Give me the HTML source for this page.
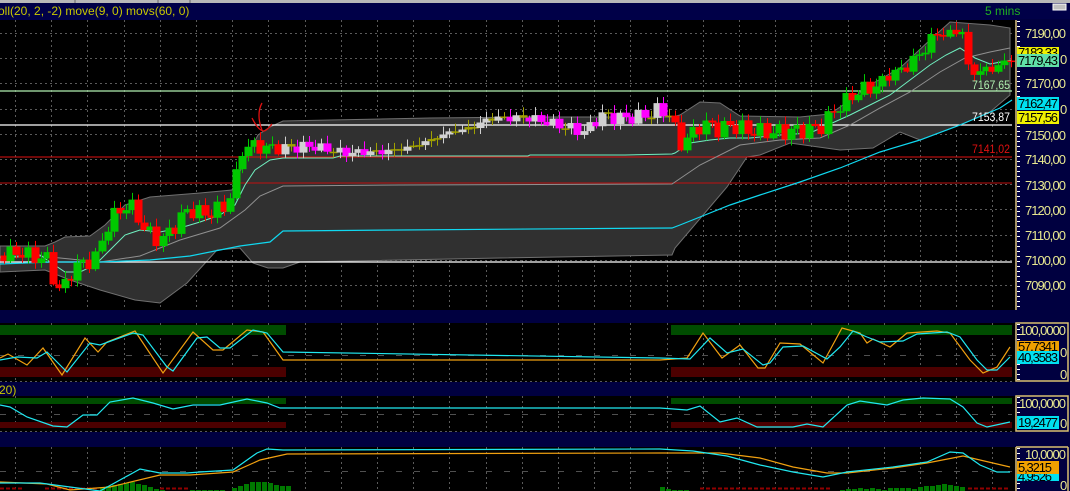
<!DOCTYPE html>
<html><head><meta charset="utf-8">
<style>
html,body{margin:0;padding:0;background:#000;width:1070px;height:491px;overflow:hidden;font-family:"Liberation Sans",sans-serif}
svg{display:block}
text{font-family:"Liberation Sans",sans-serif}
</style></head>
<body>
<svg id="s" width="1070" height="491" xmlns="http://www.w3.org/2000/svg">
<rect width="1070" height="491" fill="#000"/>
<rect x="0" y="0" width="1070" height="20" fill="#000048"/>
<rect x="0" y="0" width="1070" height="3" fill="#b8b8b8"/>
<line x1="75" y1="0" x2="75" y2="3" stroke="#666"/><line x1="158" y1="0" x2="158" y2="3" stroke="#666"/><line x1="190" y1="0" x2="190" y2="3" stroke="#666"/>
<text x="-2" y="15" font-size="12" fill="#c8c800">oll(20, 2, -2) move(9, 0) movs(60, 0)</text>
<text x="985" y="15" font-size="12" fill="#20b020">5 mins</text>
<rect x="1053" y="4" width="13" height="6" fill="#c0c0c0" stroke="#fff" stroke-width="1"/>
<g id="grid"></g>
<path id="band" fill="#303030" stroke="#707070" stroke-width="1"/>
<g id="hl">
<line x1="0" y1="91" x2="1012" y2="91" stroke="#b0f0b0" stroke-width="1.2"/>
<line x1="0" y1="125" x2="1012" y2="125" stroke="#fff" stroke-width="1.2"/>
<line x1="0" y1="157" x2="1012" y2="157" stroke="#e01010" stroke-width="1"/>
<line x1="0" y1="183" x2="1012" y2="183" stroke="#c01010" stroke-width="1"/>
<line x1="0" y1="262" x2="1012" y2="262" stroke="#fff" stroke-width="1.2"/>
</g>
<polyline id="mid" fill="none" stroke="#909090" stroke-width="1"/>
<polyline id="mv9" fill="none" stroke="#70f0c0" stroke-width="1"/>
<polyline id="mv60" fill="none" stroke="#10d8f0" stroke-width="1.2"/>
<g id="candles"></g>
<path d="M262,103 C258,110 258,120 262,130 M252,118 C256,126 260,131 264,131 C268,130 270,126 272,124" fill="none" stroke="#e01010" stroke-width="1.3"/>
<text x="972" y="89" font-size="12" fill="#b0f0b0" textLength="38" lengthAdjust="spacingAndGlyphs">7167,65</text>
<text x="972" y="121" font-size="12" fill="#fff" textLength="38" lengthAdjust="spacingAndGlyphs">7153,87</text>
<text x="972" y="153" font-size="12" fill="#e01010" textLength="38" lengthAdjust="spacingAndGlyphs">7141,02</text>

<rect x="0" y="310" width="1070" height="13" fill="#000040"/>
<rect x="0" y="382" width="1070" height="14" fill="#000040"/>
<text x="-1" y="394" font-size="12" fill="#c8c800">20)</text>
<rect x="0" y="432" width="1070" height="15" fill="#000040"/>
<rect x="0" y="325" width="286" height="10" fill="#004c00"/><rect x="671" y="325" width="341" height="10" fill="#004c00"/>
<rect x="0" y="367" width="286" height="10" fill="#4c0000"/><rect x="671" y="367" width="341" height="10" fill="#4c0000"/>
<rect x="0" y="398" width="286" height="6" fill="#004c00"/><rect x="671" y="398" width="341" height="6" fill="#004c00"/>
<rect x="0" y="422" width="286" height="6" fill="#4c0000"/><rect x="671" y="422" width="341" height="6" fill="#4c0000"/>
<g id="sub"></g>

<rect x="1015" y="19" width="55" height="291" fill="#000040"/>
<rect x="1015" y="323" width="55" height="59" fill="#000040"/>
<rect x="1015" y="396" width="55" height="36" fill="#000040"/>
<rect x="1015" y="447" width="55" height="44" fill="#000040"/>
<g stroke="#d8c070" stroke-width="1.5" fill="none">
<path d="M1016,20 V310"/><path d="M1016,323 V381 H1068 V323 Z"/><path d="M1016,396 V431 H1068 V396 Z"/><path d="M1016,447 V491 M1068,447 V491 M1016,447 H1068"/>
</g>
<g id="ticks"></g>
<g font-size="13" fill="#e8e890" lengthAdjust="spacingAndGlyphs">
<text x="1025" y="38" textLength="41">7190,00</text>
<text x="1025" y="88" textLength="41">7170,00</text>
<text x="1025" y="140" textLength="41">7150,00</text>
<text x="1025" y="164" textLength="41">7140,00</text>
<text x="1025" y="190" textLength="41">7130,00</text>
<text x="1025" y="215" textLength="41">7120,00</text>
<text x="1025" y="240" textLength="41">7110,00</text>
<text x="1025" y="265" textLength="41">7100,00</text>
<text x="1025" y="290" textLength="41">7090,00</text>
<text x="1060" y="64">0</text>
<text x="1060" y="114">0</text>
<text x="1019" y="335" textLength="47">100,0000</text>
<text x="1060" y="357">0</text>
<text x="1060" y="379">0</text>
<text x="1019" y="408" textLength="47">100,0000</text>
<text x="1060" y="428">0</text>
<text x="1025" y="459" textLength="41">10,0000</text>
<text x="1060" y="490">0</text>
</g>
<g font-size="13" fill="#000" lengthAdjust="spacingAndGlyphs">
<rect x="1017" y="47" width="42" height="10" fill="#f0f000"/><text x="1018" y="57" textLength="40">7183,33</text>
<rect x="1017" y="54" width="42" height="13" fill="#60e0a8"/><text x="1018" y="65" textLength="40">7179,43</text>
<rect x="1017" y="97" width="42" height="13" fill="#00e0f0"/><text x="1018" y="108" textLength="40">7162,47</text>
<rect x="1017" y="111" width="42" height="13" fill="#f0f000"/><text x="1018" y="122" textLength="40">7157,56</text>
<rect x="1017" y="341" width="42" height="11" fill="#f0a000"/><text x="1018" y="351" textLength="40">57,7341</text>
<rect x="1017" y="351" width="42" height="13" fill="#00e0f0"/><text x="1018" y="362" textLength="40">40,3583</text>
<rect x="1017" y="416" width="42" height="13" fill="#00e0f0"/><text x="1018" y="427" textLength="40">19,2477</text>
<rect x="1017" y="471" width="42" height="10" fill="#00e0f0"/><text x="1018" y="481" textLength="34">4,9526</text>
<rect x="1017" y="461" width="42" height="13" fill="#f0a000"/><text x="1018" y="472" textLength="34">5,3215</text>
</g>
</svg>
<script>
(function(){
var NS="http://www.w3.org/2000/svg";
function el(p,t,a){var e=document.createElementNS(NS,t);for(var k in a)e.setAttribute(k,a[k]);p.appendChild(e);return e;}
function pts(a){var s=[];for(var i=0;i<a.length;i+=2)s.push(a[i]+","+a[i+1]);return s.join(" ");}
var g=document.getElementById("grid");
var vx=[];for(var x=15;x<1012;x+=36.2)vx.push(Math.round(x));
vx.forEach(function(x){
 [[20,310],[323,382],[396,432],[447,491]].forEach(function(r){el(g,"line",{x1:x+.5,y1:r[0],x2:x+.5,y2:r[1],stroke:"#5a5a5a","stroke-dasharray":"2,3"});});
});
for(var y=33;y<310;y+=25.2){el(g,"line",{x1:0,y1:Math.round(y)+.5,x2:1012,y2:Math.round(y)+.5,stroke:"#5a5a5a","stroke-dasharray":"2,3"});}
[[355],[414],[471]].forEach(function(r){el(g,"line",{x1:0,y1:r[0]+.5,x2:1012,y2:r[0]+.5,stroke:"#505050","stroke-dasharray":"6,12"});});
[322,381,395,431,446].forEach(function(y){el(g,"line",{x1:0,y1:y+.5,x2:1012,y2:y+.5,stroke:"#5a5a5a","stroke-dasharray":"2,3"});});
var up=[0,246,45,246,55,242,65,237,90,236,105,225,125,205,150,197,200,193,232,190,245,160,258,135,270,127,283,121,330,120,430,118,530,117,672,117,680,115,700,102,720,103,740,116,800,117,830,114,850,100,870,85,900,68,930,40,950,22,990,25,1010,28];
var lo=[1010,95,990,112,960,125,920,140,900,132,873,148,840,150,790,143,760,155,747,157,727,187,675,248,672,255,500,258,300,262,283,268,268,268,253,263,240,248,217,250,187,283,160,303,135,300,100,290,70,280,45,270,0,272];
var d="M"+pts(up).replace(/ /g," L")+" L"+pts(lo).replace(/ /g," L")+" Z";
document.getElementById("band").setAttribute("d",d);
document.getElementById("mid").setAttribute("points",pts([0,258,40,256,60,258,100,262,140,256,180,240,220,228,245,210,260,196,283,186,400,185,672,184,675,182,700,165,740,145,780,140,820,138,850,125,880,108,910,92,940,72,965,58,990,52,1010,48]));
document.getElementById("mv9").setAttribute("points",pts([0,257,40,255,50,262,65,272,80,272,95,265,110,250,125,235,140,230,160,232,180,228,200,222,220,215,235,205,245,185,255,170,270,160,283,158,333,158,340,156,430,156,528,156,530,155,625,155,672,154,675,153,690,143,710,140,730,138,750,138,780,135,810,133,830,124,850,115,870,105,890,95,910,80,930,65,946,55,960,48,975,58,990,64,1012,60]));
document.getElementById("mv60").setAttribute("points",pts([0,264,50,262,100,262,150,260,190,256,220,250,240,246,270,242,283,231,400,230,672,228,680,225,700,217,730,205,760,195,800,182,840,168,880,152,920,140,960,125,1000,108,1012,100]));
var K=[3,255,20,252,35,258,45,255,52,275,58,290,65,285,72,270,85,262,97,258,105,228,115,215,125,205,135,210,145,230,155,238,165,238,175,225,185,212,195,210,205,215,215,210,225,208,235,180,242,150,250,145,258,147,270,148,290,148,310,146,330,150,345,153,360,152,380,152,395,150,410,147,430,140,450,132,470,128,490,118,510,118,530,118,550,123,570,128,585,132,600,115,620,118,640,117,660,110,672,115,678,145,690,137,700,125,710,125,720,130,730,125,745,130,760,132,780,132,800,130,820,128,830,115,840,105,850,98,860,90,870,88,880,85,890,72,900,72,910,62,920,55,930,40,940,32,950,35,955,32,962,30,968,70,975,72,985,70,995,68,1005,62,1012,57];
function f(x){for(var i=0;i<K.length-2;i+=2){if(x<=K[i+2]){var t=(x-K[i])/(K[i+2]-K[i]);return K[i+1]+t*(K[i+3]-K[i+1]);}}return K[K.length-1];}
var cg=document.getElementById("candles");var prev=f(0);
for(var x=4;x<1012;x+=6.1){
 var n=Math.sin(x*1.7)*5+Math.sin(x*0.37)*4;
 var c=f(x)+n;var o=prev;prev=c;
 var top=Math.min(o,c),bot=Math.max(o,c);if(bot-top<1.5){bot=top+1.5;}
 var w1=top-2-Math.abs(Math.sin(x*2.3))*6,w2=bot+1+Math.abs(Math.cos(x*1.1))*5;
 var upc=c<o;var col;
 if(x>283&&x<672){col=(bot-top<2.5)?"#a0a000":(upc?"#d0d0d0":"#ff00ff");}
 else col=upc?"#00c800":"#ff0000";
 var cx=Math.round(x)+.5;
 el(cg,"line",{x1:cx,y1:w1,x2:cx,y2:w2,stroke:col,"stroke-width":1});
 el(cg,"rect",{x:cx-4,y:top,width:8,height:bot-top,fill:col});
}
var sg=document.getElementById("sub");
function pl(a,c){el(sg,"polyline",{points:pts(a),fill:"none",stroke:c,"stroke-width":1.2});}
var hb=[[100,3],[106,5],[112,6],[118,7],[124,8],[130,9],[136,7],[142,6],[148,4],[154,2],[160,1],[190,1],[196,1],[202,1],[208,1],[214,1],[220,1],[232,3],[238,5],[244,7],[250,9],[256,9],[262,9],[268,8],[274,6],[280,5],[286,5],[660,4],[666,2],[672,1],[678,1],[684,1],[840,1],[846,2],[852,2],[858,3],[864,2],[870,3],[876,2],[882,1],[888,3],[894,3],[900,3],[906,3],[912,2],[918,4],[924,5],[930,5],[936,6],[942,7],[948,6],[954,5],[960,4]];
hb.forEach(function(b){el(sg,"rect",{x:b[0],y:491-b[1],width:5,height:b[1],fill:"#007800"});});
[[0,12],[12,24],[45,99],[160,190],[700,830],[968,1010]].forEach(function(r){el(sg,"line",{x1:r[0],y1:488.5,x2:r[1],y2:488.5,stroke:"#900000","stroke-width":2,"stroke-dasharray":"4,2"});});
pl([0,358,8,354,27,365,43,348,62,375,85,338,98,352,107,342,135,331,163,373,193,332,213,350,223,350,247,330,263,332,283,360,660,360,687,358,703,333,722,358,740,345,758,368,765,368,780,343,800,344,823,363,842,328,860,333,867,343,873,339,890,347,907,333,937,331,950,333,970,360,983,373,997,367,1010,347],"#f0a010");
pl([0,360,17,357,37,358,47,352,67,372,90,343,100,345,133,333,143,335,167,367,173,371,197,338,207,337,220,348,230,348,253,330,267,333,283,352,660,358,690,359,710,338,727,353,743,349,763,365,770,363,783,347,803,346,827,359,840,347,853,331,867,337,880,342,903,341,917,334,947,332,960,337,977,360,987,370,997,370,1010,357],"#20e8f0");
pl([0,405,10,407,27,417,53,426,67,427,83,415,97,415,110,402,133,398,153,403,173,409,193,405,220,405,247,399,267,403,280,408,660,408,687,410,700,406,720,422,737,418,757,427,793,427,807,424,823,427,847,405,860,401,887,405,903,400,923,398,950,399,963,407,977,423,987,427,1010,422],"#20e8f0");
pl([0,482,47,484,70,490,110,487,160,475,190,475,233,472,260,460,287,454,660,453,720,453,760,458,793,467,827,473,847,473,893,468,927,463,963,456,980,460,1010,467],"#f0a010");
pl([0,483,40,483,100,491,140,469,160,473,187,473,200,472,233,470,257,453,267,449,283,450,660,449,693,451,727,456,760,465,793,472,823,477,847,472,893,467,927,462,950,452,963,453,980,465,997,472,1010,472],"#20e8f0");
var tg=document.getElementById("ticks");
[[21,309],[324,380],[397,430],[448,491]].forEach(function(r){for(var y=r[0];y<r[1];y+=5)el(tg,"line",{x1:1017,y1:y+.5,x2:1020,y2:y+.5,stroke:"#fff","stroke-width":1});});
})();
</script>
</body></html>
